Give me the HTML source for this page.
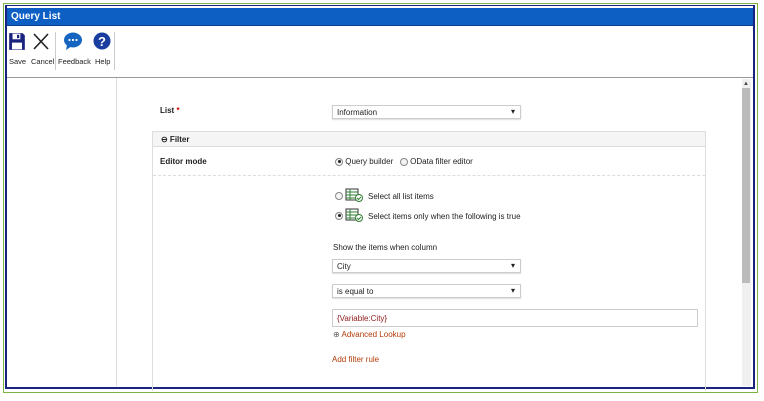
<!DOCTYPE html>
<html><head><style>
*{box-sizing:border-box;margin:0;padding:0}
body{width:764px;height:401px;background:#fff;font-family:"Liberation Sans",sans-serif;font-size:8px;color:#222;position:relative;overflow:hidden}
.abs{position:absolute}
.sel{position:absolute;border:1px solid #ccc;background:#fff;height:14px;font-size:8px;padding:2px 4px;box-shadow:0 1px 1px #ddd}
.sel:after{content:"▾";position:absolute;right:5px;top:1px;font-size:8px}
.radio{display:inline-block;width:8px;height:8px;border:1px solid #888;border-radius:50%;vertical-align:middle;position:relative;background:#f4f4f4}
.radio.on:after{content:"";position:absolute;left:1.5px;top:1.5px;width:3px;height:3px;border-radius:50%;background:#222}
.tb{position:absolute;top:57px;font-size:7.5px;color:#222}
</style></head><body>
<div class="abs" style="left:3px;top:3px;width:755px;height:390px;border:1px solid #7cb342"></div>
<div class="abs" style="left:5px;top:5px;width:750px;height:384px;border:2px solid #1a237e;border-top:1px solid #1a237e;background:#fff"></div>
<div class="abs" style="left:7px;top:8px;width:746px;height:18px;background:#0d5fc4;border-bottom:1px solid #0a3f8a"></div>
<div class="abs" style="left:11px;top:11px;color:#fff;font-weight:bold;font-size:10px">Query List</div>
<!-- toolbar -->
<svg class="abs" style="left:8px;top:32px" width="18" height="19" viewBox="0 0 16 17"><path d="M1 1h12l2 2v13H1z" fill="#1a237e"/><rect x="4" y="1.5" width="7" height="5" fill="#fff"/><rect x="8" y="2.5" width="2" height="3" fill="#1a237e"/><rect x="3.5" y="9.5" width="9" height="6" fill="#fff"/></svg>
<svg class="abs" style="left:33px;top:33px" width="16" height="17"><path d="M1 1L15 16M15 1L1 16" stroke="#222" stroke-width="1.6"/></svg>
<div class="abs" style="left:55px;top:32px;width:1px;height:38px;background:#ccc"></div>
<svg class="abs" style="left:63px;top:32px" width="20" height="19"><ellipse cx="10" cy="8" rx="9" ry="7.5" fill="#1565c0"/><path d="M4 13L3 18L9 14z" fill="#1565c0"/><circle cx="6.5" cy="8" r="1.1" fill="#fff"/><circle cx="10" cy="8" r="1.1" fill="#fff"/><circle cx="13.5" cy="8" r="1.1" fill="#fff"/></svg>
<svg class="abs" style="left:93px;top:32px" width="18" height="18"><circle cx="9" cy="9" r="8.5" fill="#1a3ea0"/><text x="9" y="14" text-anchor="middle" fill="#fff" font-size="13" font-weight="bold" font-family="Liberation Sans">?</text></svg>
<div class="abs" style="left:114px;top:32px;width:1px;height:38px;background:#ccc"></div>
<div class="tb" style="left:9px">Save</div>
<div class="tb" style="left:31px">Cancel</div>
<div class="tb" style="left:58px">Feedback</div>
<div class="tb" style="left:95px">Help</div>
<div class="abs" style="left:7px;top:77px;width:746px;height:1px;background:#999"></div>
<div class="abs" style="left:116px;top:78px;width:1px;height:308px;background:#ddd"></div>
<!-- scrollbar -->
<div class="abs" style="left:742px;top:79px;width:9px;height:307px;background:#f0f0f0"></div>
<div class="abs" style="left:743px;top:81px;font-size:6px;color:#444">▲</div>
<div class="abs" style="left:742px;top:88px;width:8px;height:195px;background:#bbb"></div>
<!-- content -->
<div class="abs" style="left:160px;top:106px;font-weight:bold">List <span style="color:#c00">*</span></div>
<div class="sel" style="left:332px;top:105px;width:189px">Information</div>
<div class="abs" style="left:152px;top:131px;width:554px;height:260px;border:1px solid #ddd;border-bottom:none"></div>
<div class="abs" style="left:153px;top:132px;width:552px;height:15px;background:#f5f5f5;border-bottom:1px solid #ddd"></div>
<div class="abs" style="left:161px;top:135px;font-weight:bold">⊖ Filter</div>
<div class="abs" style="left:160px;top:157px;font-weight:bold">Editor mode</div>
<div class="abs" style="left:335px;top:157px"><span class="radio on"></span> Query builder &nbsp; <span class="radio"></span> OData filter editor</div>
<div class="abs" style="left:153px;top:175px;width:552px;border-top:1px dashed #ddd"></div>
<div class="abs" style="left:335px;top:191px"><span class="radio"></span></div>
<div class="abs" style="left:335px;top:211px"><span class="radio on"></span></div>
<svg class="abs" style="left:345px;top:188px" width="18" height="14"><rect x="1" y="1" width="12" height="11" fill="#fff" stroke="#333"/><path d="M1 4h12M1 7h12M1 10h12M5 1v11" stroke="#2e7d32"/><circle cx="14" cy="10" r="3.5" fill="#fff" stroke="#2e7d32"/><path d="M12 10l1.5 1.5L16 9" stroke="#2e7d32" fill="none"/></svg>
<svg class="abs" style="left:345px;top:208px" width="18" height="14"><rect x="1" y="1" width="12" height="11" fill="#fff" stroke="#333"/><path d="M1 4h12M1 7h12M1 10h12M5 1v11" stroke="#2e7d32"/><circle cx="14" cy="10" r="3.5" fill="#fff" stroke="#2e7d32"/><path d="M12 10l1.5 1.5L16 9" stroke="#2e7d32" fill="none"/></svg>
<div class="abs" style="left:368px;top:192px">Select all list items</div>
<div class="abs" style="left:368px;top:212px">Select items only when the following is true</div>
<div class="abs" style="left:333px;top:243px">Show the items when column</div>
<div class="sel" style="left:332px;top:259px;width:189px">City</div>
<div class="sel" style="left:332px;top:284px;width:189px">is equal to</div>
<div class="abs" style="left:332px;top:309px;width:366px;height:18px;border:1px solid #ccc;color:#8b1a1a;padding:4px 4px">{Variable:City}</div>
<div class="abs" style="left:333px;top:330px;color:#b23c0a"><span style="color:#666">⊕</span> Advanced Lookup</div>
<div class="abs" style="left:332px;top:355px;color:#b23c0a">Add filter rule</div>
</body></html>
